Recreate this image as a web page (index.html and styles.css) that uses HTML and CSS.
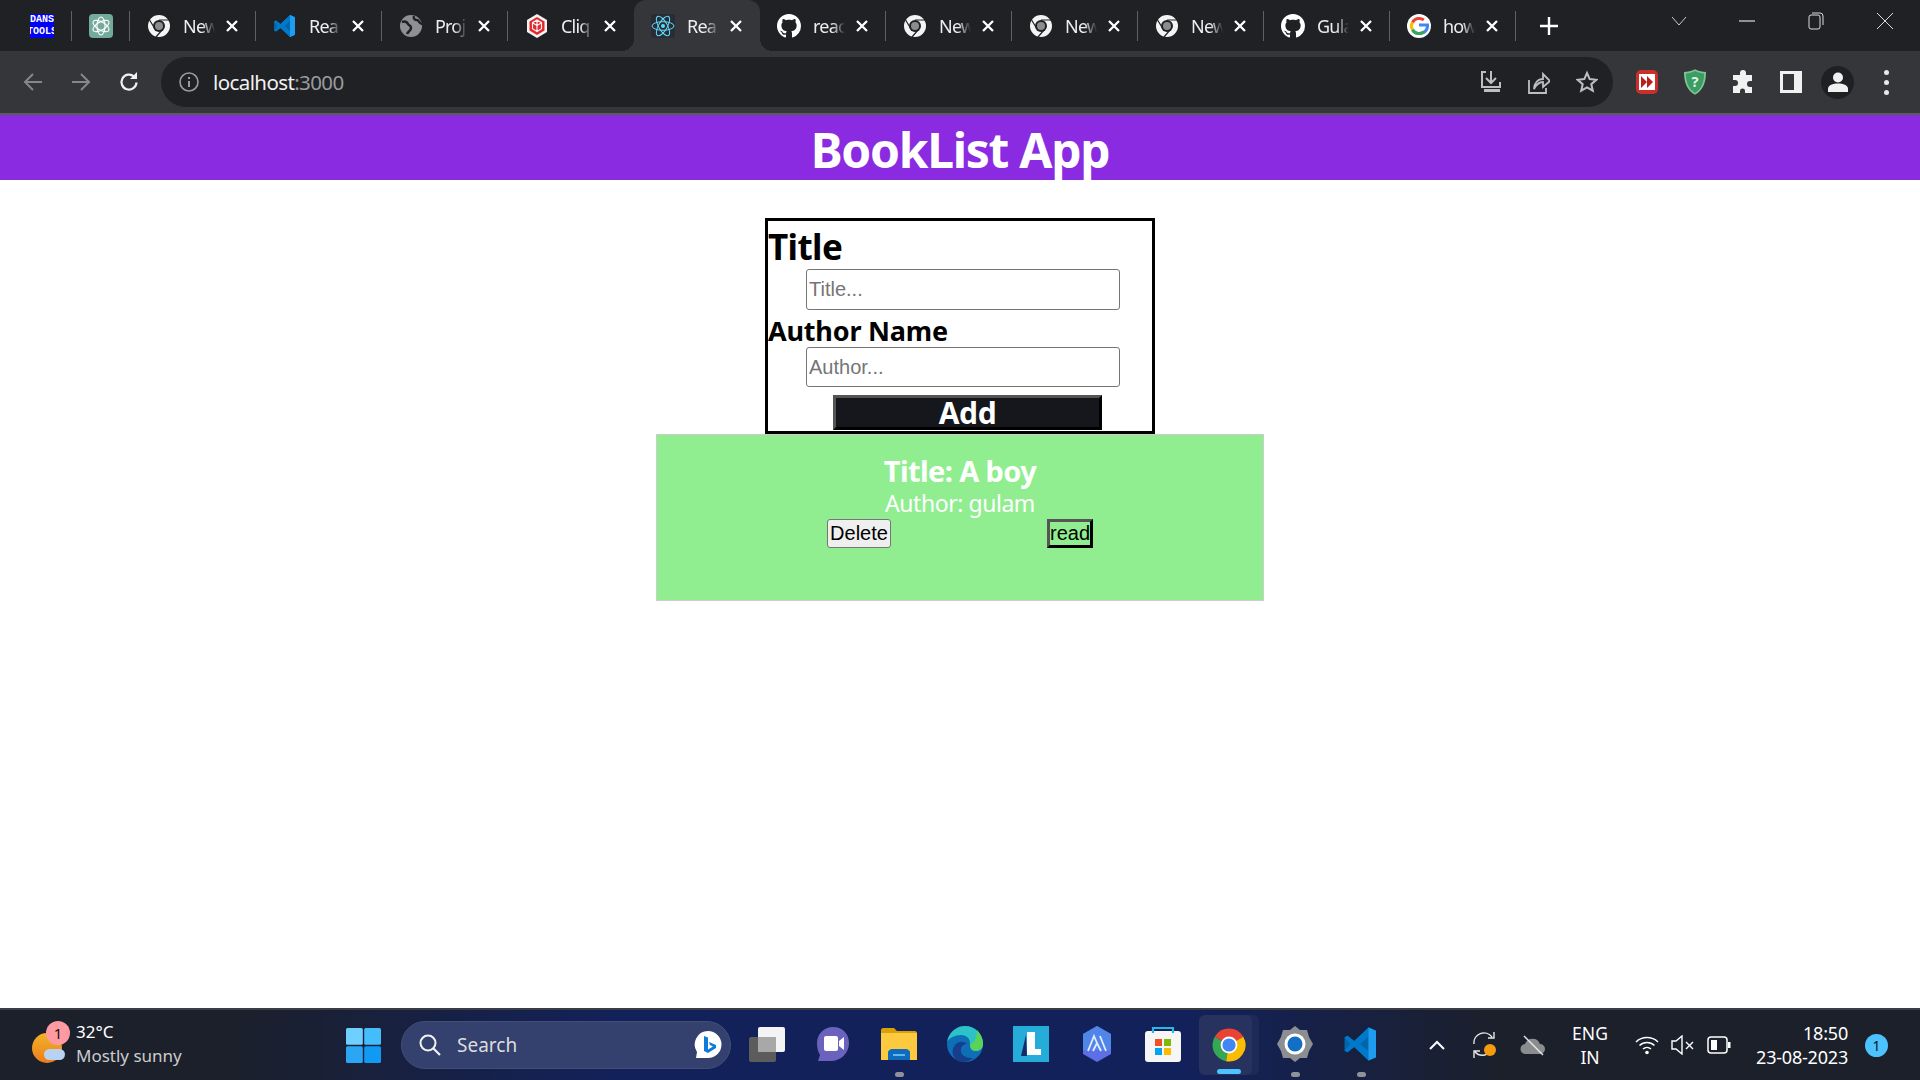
FILE: index.html
```html
<!DOCTYPE html>
<html lang="en">
<head>
    <meta charset="UTF-8">
    <title>BookList App</title>
    <link rel="stylesheet" href="styles.css">
</head>
<body>
<svg class="defs" width="0" height="0">
    <symbol id="chrome-mono" viewBox="0 0 24 24">
        <circle cx="12" cy="12" r="11" fill="#f4f4f4"/>
        <circle cx="12" cy="12" r="6" fill="#202124"/>
        <circle cx="12" cy="12" r="4" fill="#8a8c90"/>
        <path d="M12 6H23M8 15L2 5M15 16L9 23" stroke="#202124" stroke-width="1.2"/>
    </symbol>
    <symbol id="github" viewBox="0 0 16 16">
        <path fill="#fff" d="M8 0C3.58 0 0 3.58 0 8c0 3.54 2.29 6.53 5.47 7.59.4.07.55-.17.55-.38 0-.19-.01-.82-.01-1.49-2.01.37-2.53-.49-2.69-.94-.09-.23-.48-.94-.82-1.13-.28-.15-.68-.52-.01-.53.63-.01 1.08.58 1.23.82.72 1.21 1.87.87 2.33.66.07-.52.28-.87.51-1.07-1.78-.2-3.64-.89-3.64-3.95 0-.87.31-1.59.82-2.15-.08-.2-.36-1.02.08-2.12 0 0 .67-.21 2.2.82.64-.18 1.32-.27 2-.27s1.36.09 2 .27c1.53-1.04 2.2-.82 2.2-.82.44 1.1.16 1.92.08 2.12.51.56.82 1.27.82 2.15 0 3.07-1.87 3.75-3.65 3.95.29.25.54.73.54 1.48 0 1.07-.01 1.93-.01 2.2 0 .21.15.46.55.38A8.01 8.01 0 0 0 16 8c0-4.42-3.58-8-8-8z"/>
    </symbol>
    <symbol id="vscode" viewBox="0 0 24 24">
        <path fill="#0065a9" d="M17 1L7.5 10 3 6.5 1 7.5v9l2 1 4.5-3.500L17 23l5-2.200V3.200z"/>
        <path fill="#007acc" d="M17 1l5 2.200v17.600L17 23 7.500 14 3 17.500l-2-1L5 12 1 7.500l2-1L7.500 10zM17 7l-5.500 5 5.500 5z" opacity=".95"/>
        <path fill="#1f9cf0" d="M17 1l5 2.200v17.600L17 23z"/>
    </symbol>
    <symbol id="chrome-color" viewBox="0 0 24 24">
        <path fill="#ea4335" d="M12 12L21.530 6.500A11 11 0 0 0 2.470 6.500z"/>
        <path fill="#34a853" d="M12 12L2.470 6.500A11 11 0 0 0 10 22.820z"/>
        <path fill="#fbbc04" d="M12 12L10 22.820A11 11 0 0 0 21.530 6.500z"/>
        <circle cx="12" cy="12" r="5.600" fill="#fff"/>
        <circle cx="12" cy="12" r="4.400" fill="#4285f4"/>
    </symbol>
    <symbol id="close" viewBox="0 0 12 12">
        <path d="M1 1l10 10M11 1L1 11" stroke="#fff" stroke-width="2.300"/>
    </symbol>
</svg>

<div class="tabbar">
    <div class="pinned first">
        <span class="dans">DANS<span class="dans-low">TOOLS</span></span>
    </div>
    <div class="pinned">
        <svg class="favicon" viewBox="0 0 24 24">
            <rect width="24" height="24" rx="4" fill="#74aa9c"/>
            <g fill="none" stroke="#fff" stroke-width="1.100">
                <ellipse cx="12" cy="12" rx="4" ry="9"/>
                <ellipse cx="12" cy="12" rx="4" ry="9" transform="rotate(60 12 12)"/>
                <ellipse cx="12" cy="12" rx="4" ry="9" transform="rotate(120 12 12)"/>
            </g>
        </svg>
    </div>
    <div class="tab">
        <svg class="favicon"><use href="#chrome-mono"/></svg>
        <span class="tab-title">New</span><svg class="tab-close"><use href="#close"/></svg>
    </div>
    <div class="tab">
        <svg class="favicon"><use href="#vscode"/></svg>
        <span class="tab-title">Rea</span><svg class="tab-close"><use href="#close"/></svg>
    </div>
    <div class="tab">
        <svg class="favicon" viewBox="0 0 24 24">
            <circle cx="12" cy="12" r="11" fill="#8e9094"/>
            <path d="M3 8c3-1 5 0 6 2s3 1 3 4-3 3-4 6M15 2c-1 3 1 4 3 4s2 4 5 4" fill="none" stroke="#202124" stroke-width="2.500"/>
        </svg>
        <span class="tab-title">Proj</span><svg class="tab-close"><use href="#close"/></svg>
    </div>
    <div class="tab tab-before-active">
        <svg class="favicon" viewBox="0 0 24 24">
            <path d="M12 0l10 6v12l-10 6-10-6V6z" fill="#f3f3f3"/>
            <path d="M12 3l7.500 4.500v9L12 21l-7.500-4.500v-9z" fill="#e5262b"/>
            <path d="M12 6l4.500 2.700v6L12 17.500l-4.500-2.800v-6zM12 6v11.500M7.500 8.700L12 11.500l4.500-2.800" fill="none" stroke="#f3f3f3" stroke-width="1.200"/>
        </svg>
        <span class="tab-title">Cliq</span><svg class="tab-close"><use href="#close"/></svg>
    </div>
    <div class="tab active">
        <svg class="favicon" viewBox="0 0 24 24">
            <rect width="24" height="24" rx="3" fill="#282c34"/>
            <g fill="none" stroke="#61dafb" stroke-width="1">
                <ellipse cx="12" cy="12" rx="11" ry="4.300"/>
                <ellipse cx="12" cy="12" rx="11" ry="4.300" transform="rotate(60 12 12)"/>
                <ellipse cx="12" cy="12" rx="11" ry="4.300" transform="rotate(120 12 12)"/>
            </g>
            <circle cx="12" cy="12" r="2" fill="#61dafb"/>
        </svg>
        <span class="tab-title">Rea</span><svg class="tab-close"><use href="#close"/></svg>
    </div>
    <div class="tab">
        <svg class="favicon"><use href="#github"/></svg>
        <span class="tab-title">reac</span><svg class="tab-close"><use href="#close"/></svg>
    </div>
    <div class="tab">
        <svg class="favicon"><use href="#chrome-mono"/></svg>
        <span class="tab-title">New</span><svg class="tab-close"><use href="#close"/></svg>
    </div>
    <div class="tab">
        <svg class="favicon"><use href="#chrome-mono"/></svg>
        <span class="tab-title">New</span><svg class="tab-close"><use href="#close"/></svg>
    </div>
    <div class="tab">
        <svg class="favicon"><use href="#chrome-mono"/></svg>
        <span class="tab-title">New</span><svg class="tab-close"><use href="#close"/></svg>
    </div>
    <div class="tab">
        <svg class="favicon"><use href="#github"/></svg>
        <span class="tab-title">Gula</span><svg class="tab-close"><use href="#close"/></svg>
    </div>
    <div class="tab">
        <svg class="favicon" viewBox="0 0 24 24">
            <circle cx="12" cy="12" r="12" fill="#fff"/>
            <path d="M12 11h8.500c.3 5-3 8.500-8.500 8.500a7.500 7.500 0 0 1-6.500-3.800" fill="none" stroke="#4285f4" stroke-width="3"/>
            <path d="M5.500 8.500A7.500 7.500 0 0 1 16.800 6" fill="none" stroke="#ea4335" stroke-width="3"/>
            <path d="M5.500 8.200a7.500 7.500 0 0 0 0 7.600" fill="none" stroke="#fbbc04" stroke-width="3"/>
            <path d="M5.500 15.700A7.500 7.500 0 0 0 17 17.600" fill="none" stroke="#34a853" stroke-width="3"/>
        </svg>
        <span class="tab-title">how</span><svg class="tab-close"><use href="#close"/></svg>
    </div>
    <svg class="new-tab" viewBox="0 0 18 18"><path d="M9 0v18M0 9h18" stroke="#fff" stroke-width="2.400"/></svg>
    <div class="window-btns">
        <svg viewBox="0 0 16 10" class="win-down"><path d="M1 1l7 8 7-8" fill="none" stroke="#ccc"/></svg>
        <svg viewBox="0 0 16 16" class="win-min"><path d="M0 8h16" stroke="#ddd" stroke-width="1.200"/></svg>
        <svg viewBox="0 0 16 18" class="win-max"><rect x="1" y="3" width="11" height="14" rx="2" fill="none" stroke="#ddd"/><path d="M4 1h8a3 3 0 0 1 3 3v9" fill="none" stroke="#ddd"/></svg>
        <svg viewBox="0 0 16 16" class="win-close"><path d="M0 0l16 16M16 0L0 16" stroke="#ddd"/></svg>
    </div>
</div>

<div class="toolbar">
    <svg class="nav" viewBox="0 0 20 20"><path d="M19 10H2M10 2l-8 8 8 8" fill="none" stroke="#85878a" stroke-width="2"/></svg>
    <svg class="nav" viewBox="0 0 20 20"><path d="M1 10h17M10 2l8 8-8 8" fill="none" stroke="#85878a" stroke-width="2"/></svg>
    <svg class="nav" viewBox="0 0 20 20"><path d="M17.500 10.500A7.500 7.500 0 1 1 15 4.500" fill="none" stroke="#f1f1f1" stroke-width="2.200"/><path d="M11 7h7V0z" fill="#f1f1f1"/></svg>
    <div class="omnibox">
        <svg class="info" viewBox="0 0 20 20"><circle cx="10" cy="10" r="9" fill="none" stroke="#9a9c9f" stroke-width="1.600"/><path d="M10 9v6M10 5v2" stroke="#9a9c9f" stroke-width="2"/></svg>
        <span class="url">localhost<span class="port">:3000</span></span>
        <div class="omni-icons">
            <svg viewBox="0 0 22 24"><path d="M6 2H2v15h18v-5M11 1v12M6 8l5 5 5-5" fill="none" stroke="#bdbec0" stroke-width="2"/><rect x="4" y="19" width="16" height="3" fill="#bdbec0"/></svg>
            <svg viewBox="0 0 22 24"><path d="M1 10v13h17v-5" fill="none" stroke="#bdbec0" stroke-width="1.800"/><path d="M6 19c0-6 4-10 9-10V4l7 7-7 6v-5c-4 0-7 3-9 7z" fill="none" stroke="#bdbec0" stroke-width="1.800"/></svg>
            <svg viewBox="0 0 22 22"><path d="M11 2l2.700 6.100 6.600.7-5 4.400 1.500 6.500L11 16.300l-5.800 3.400 1.500-6.500-5-4.400 6.600-.7z" fill="none" stroke="#bdbec0" stroke-width="2"/></svg>
        </div>
    </div>
    <div class="ext-icons">
        <svg viewBox="0 0 22 24"><rect width="22" height="24" rx="5" fill="#c9302c"/><rect x="3" y="4" width="16" height="16" fill="#fff"/><path d="M5 6l6 6-6 6zM11 6l6 6-6 6z" fill="#b9201d"/></svg>
        <svg viewBox="0 0 24 28"><path d="M12 0c4 2 8 3 12 3 0 11-3 20-12 25C3 23 0 14 0 3c4 0 8-1 12-3z" fill="#7cc596"/><path d="M12 2c3.500 1.500 6.500 2.500 10 2.700C22 14 19 21.500 12 26 5 21.500 2 14 2 4.700 5.500 4.500 8.500 3.500 12 2z" fill="#3c9d63"/><text x="12" y="19" class="ext-q">?</text></svg>
        <svg viewBox="0 0 22 22"><path fill="#f1f1f1" d="M8 2a3 3 0 0 1 6 0v2h6v6h-2a3 3 0 0 0 0 6h2v6h-7v-2a2.500 2.500 0 0 0-5 0v2H1v-7h2a3 3 0 0 0 0-6H1V4h7z"/></svg>
        <svg viewBox="0 0 22 22"><path fill="#f1f1f1" fill-rule="evenodd" d="M0 0h22v22H0zM3 3v16h11V3z"/></svg>
        <div class="avatar">
            <svg viewBox="0 0 20 20"><circle cx="10" cy="5.500" r="5" fill="#f1f1f1"/><path d="M0 20v-3c0-4 5-5.500 10-5.500s10 1.500 10 5.500v3z" fill="#f1f1f1"/></svg>
        </div>
        <div class="kebab"><span></span><span></span><span></span></div>
    </div>
</div>
<div class="toolbar-line"></div>

<div class="page">
    <h1 class="app-title">BookList App</h1>
    <form class="book-form">
        <h1 class="label-big">Title</h1>
        <input class="field first-field" placeholder="Title...">
        <h2 class="label-small">Author Name</h2>
        <input class="field" placeholder="Author...">
        <button type="button" class="add-btn">Add</button>
    </form>
    <div class="book-card">
        <h3 class="book-title">Title: A boy</h3>
        <p class="book-author">Author: gulam</p>
        <div class="book-actions">
            <button type="button" class="delete-btn">Delete</button>
            <button type="button" class="read-btn">read</button>
        </div>
    </div>
</div>

<div class="taskbar">
    <div class="weather">
        <div class="sun">
            <span class="sun-disc"></span>
            <span class="cloud"></span>
            <span class="sun-badge">1</span>
        </div>
        <div class="weather-text">
            <span class="temp">32°C</span>
            <span class="sky">Mostly sunny</span>
        </div>
    </div>
    <svg class="start" viewBox="0 0 35 35">
        <rect width="16.800" height="16.800" rx="1.500" fill="#6fd0ff"/>
        <rect x="18.200" width="16.800" height="16.800" rx="1.500" fill="#45bcfb"/>
        <rect y="18.200" width="16.800" height="16.800" rx="1.500" fill="#2aa6f5"/>
        <rect x="18.200" y="18.200" width="16.800" height="16.800" rx="1.500" fill="#119af3"/>
    </svg>
    <div class="search">
        <svg class="search-glass" viewBox="0 0 22 22"><circle cx="9" cy="9" r="7.500" fill="none" stroke="#f2f2f2" stroke-width="2"/><path d="M14.500 14.500L21 21" stroke="#f2f2f2" stroke-width="2.200"/></svg>
        <span class="search-text">Search</span>
        <svg class="bing" viewBox="0 0 30 30"><path d="M15 1a13.500 13.500 0 0 1 0 27H3l1-6A13.500 13.500 0 0 1 15 1z" fill="#fff"/><path d="M11 6l4 1.500v12l5-3-3-1.500-1-3 7 3v3l-8 5-4-2z" fill="#0f7ad8"/></svg>
    </div>
    <div class="apps">
        <div class="app">
            <svg viewBox="0 0 36 36">
                <rect x="0" y="11" width="27" height="25" rx="2" fill="#5c5c5c"/>
                <rect x="9" y="1" width="27" height="25" rx="2" fill="#f4f4f4"/>
                <rect x="9" y="11" width="18" height="15" fill="#a8a8a8"/>
            </svg>
        </div>
        <div class="app">
            <svg viewBox="0 0 36 36">
                <path d="M18 1c10 0 16 7 16 16 0 10-8 18-18 18H3l2-6C3 26 2 22 2 17 2 8 9 1 18 1z" fill="#6b62bd"/>
                <rect x="9" y="10" width="14" height="15" rx="2" fill="#fff"/>
                <path d="M24 15l5-4v13l-5-4z" fill="#fff"/>
            </svg>
        </div>
        <div class="app has-dot">
            <svg viewBox="0 0 36 36">
                <path d="M0 4c0-1 1-2 2-2h11l3 3h18c1 0 2 1 2 2v10H0z" fill="#d9a008"/>
                <path d="M0 7h36v27H0z" fill="#fdc93f"/>
                <path d="M7 34V26c0-1 2-3 4-3h14c2 0 4 2 4 3v8z" fill="#0f6cbd"/>
                <rect x="12" y="28" width="12" height="2" fill="#65b5ef"/>
            </svg>
        </div>
        <div class="app">
            <svg viewBox="0 0 36 36">
                <circle cx="18" cy="18" r="18" fill="#0f6fb6"/>
                <path d="M0 16C2 6 10 0 18 0c10 0 18 8 18 18 0 4-3 7-7 7-6 0-6-4-6-8 0-5-4-8-9-8-6 0-12 3-14 7z" fill="#2cc2c7"/>
                <path d="M30 4c4 4 6 9 6 14 0 4-3 7-7 7-5 0-6-4-6-7 3 0 7-4 7-14z" fill="#5ad35b"/>
                <path d="M14 36C6 34 3 25 8 19c3-4 9-4 12-1-4 0-7 3-6 8 1 4 6 6 12 6-3 3-7 4-12 4z" fill="#163e8c"/>
            </svg>
        </div>
        <div class="app">
            <svg viewBox="0 0 36 36">
                <rect width="36" height="36" fill="#25acd8"/>
                <path d="M14 6h8v20h-8z" fill="#fff"/>
                <path d="M14 23h14v6H14z" fill="#fff"/>
                <path d="M13 9L8 30h6z" fill="#142a6b"/>
            </svg>
        </div>
        <div class="app">
            <svg viewBox="0 0 32 36">
                <path d="M16 0l14 8v20l-14 8-14-8V8z" fill="#5d6fe6"/>
                <path d="M16 0l14 8v16H2V8z" fill="#4a90e8" opacity=".7"/>
                <path d="M7 25l6-15 3 7M25 25l-6-15M12 25l4-8 4 8" fill="none" stroke="#e6ecff" stroke-width="1.800"/>
            </svg>
        </div>
        <div class="app">
            <svg viewBox="0 0 36 36">
                <rect y="5" width="36" height="31" rx="3" fill="#f6f6f6"/>
                <path d="M8 7V2h20v5" fill="none" stroke="#29b6e8" stroke-width="2.200"/>
                <rect x="10" y="13" width="7" height="7" fill="#f25022"/>
                <rect x="19" y="13" width="7" height="7" fill="#7fba00"/>
                <rect x="10" y="22" width="7" height="7" fill="#00a4ef"/>
                <rect x="19" y="22" width="7" height="7" fill="#ffb900"/>
            </svg>
        </div>
        <div class="app app-active">
            <svg><use href="#chrome-color"/></svg>
        </div>
        <div class="app has-dot">
            <svg viewBox="0 0 36 36">
                <path d="M18 0l5 4 7 0 2 7 4 7-4 7-2 7-7 0-5 4-5-4-7 0-2-7-4-7 4-7 2-7 7 0z" fill="#8b8f94"/>
                <circle cx="18" cy="18" r="10.500" fill="#fff"/>
                <circle cx="18" cy="18" r="7.500" fill="#1170c6"/>
            </svg>
        </div>
        <div class="app has-dot">
            <svg><use href="#vscode"/></svg>
        </div>
    </div>
    <div class="tray">
        <svg class="tray-chevron" viewBox="0 0 16 10"><path d="M1 9l7-7 7 7" fill="none" stroke="#fff" stroke-width="2"/></svg>
        <svg class="tray-sync" viewBox="0 0 26 26">
            <path d="M2 12A10 10 0 0 1 20 5M22 0v6h-6M20 16A10 10 0 0 1 3 20M2 26v-7h6" fill="none" stroke="#e8e8e8" stroke-width="1.400"/>
            <circle cx="18" cy="18" r="6" fill="#f59b0c"/>
        </svg>
        <svg class="tray-cloud" viewBox="0 0 26 22">
            <path d="M6 20a5 5 0 0 1-1-10 8 8 0 0 1 15 0 5 5 0 0 1 0 10z" fill="#8a8c8f"/>
            <path d="M4 2l19 19" stroke="#e8e8e8" stroke-width="1.400"/>
        </svg>
        <div class="lang"><span>ENG</span><span>IN</span></div>
        <svg class="tray-wifi" viewBox="0 0 24 20">
            <path d="M1 7a16 16 0 0 1 22 0M4.500 10.500a11 11 0 0 1 15 0M8 14a6 6 0 0 1 8 0" fill="none" stroke="#fff" stroke-width="1.500"/>
            <circle cx="12" cy="17.500" r="1.800" fill="#fff"/>
        </svg>
        <svg class="tray-sound" viewBox="0 0 24 20">
            <path d="M1 6h4l6-5v18l-6-5H1z" fill="none" stroke="#fff" stroke-width="1.400"/>
            <path d="M15 7l7 7M22 7l-7 7" stroke="#fff" stroke-width="1.400"/>
        </svg>
        <svg class="tray-battery" viewBox="0 0 24 20">
            <rect x="1" y="2" width="19" height="16" rx="3" fill="none" stroke="#fff" stroke-width="1.500"/>
            <rect x="4" y="5" width="6" height="10" fill="#fff"/>
            <rect x="21" y="7" width="2.500" height="6" fill="#fff"/>
        </svg>
        <div class="clock"><span>18:50</span><span>23-08-2023</span></div>
        <span class="notify">1</span>
    </div>
</div>
</body>
</html>
```

FILE: styles.css
```css
html, body {
    margin: 0;
    padding: 0;
}

body {
    width: 1920px;
    height: 1080px;
    display: flex;
    flex-direction: column;
    overflow: hidden;
    background: #fff;
    font-family: "Noto Sans", sans-serif;
}

.defs {
    display: none;
}

/* browser tabs */
.tabbar {
    height: 51px;
    flex: none;
    display: flex;
    align-items: center;
    background: #202124;
    color: #fff;
}

.pinned {
    height: 51px;
    width: 58px;
    box-sizing: border-box;
    display: flex;
    align-items: center;
    justify-content: center;
    position: relative;
}

.pinned.first {
    width: 72px;
    padding-left: 12px;
}

.pinned::after,
.tab::after {
    content: "";
    position: absolute;
    right: 0;
    top: 11px;
    height: 30px;
    width: 1px;
    background: #5f6063;
}

.favicon {
    width: 24px;
    height: 24px;
    flex: none;
}

.dans {
    width: 24px;
    height: 24px;
    background: #0000f2;
    color: #fff;
    font: bold 10px/12px "Liberation Mono", monospace;
    white-space: nowrap;
    overflow: hidden;
}

.dans-low {
    display: block;
    margin-left: -3px;
}

.tab {
    width: 126px;
    height: 51px;
    box-sizing: border-box;
    padding-left: 17px;
    display: flex;
    align-items: center;
    position: relative;
    flex: none;
}

.tab-title {
    width: 32px;
    margin-left: 12px;
    font-size: 18px;
    letter-spacing: -0.8px;
    white-space: nowrap;
    overflow: hidden;
    color: #eee;
    -webkit-mask-image: linear-gradient(to right, #000 60%, transparent 100%);
    mask-image: linear-gradient(to right, #000 60%, transparent 100%);
}

.tab-close {
    width: 12px;
    height: 12px;
    margin-left: 11px;
    flex: none;
}

.tab-before-active::after {
    display: none;
}

.tab.active {
    background: #35363a;
    border-radius: 12px 12px 0 0;
}

/* little flared corners at the foot of the active tab */
.tab.active::before,
.tab.active::after {
    content: "";
    position: absolute;
    top: auto;
    bottom: 0;
    width: 12px;
    height: 12px;
}

.tab.active::before {
    left: -12px;
    background: radial-gradient(circle at 0 0, transparent 12px, #35363a 12px);
}

.tab.active::after {
    right: -12px;
    background: radial-gradient(circle at 100% 0, transparent 12px, #35363a 12px);
}

.new-tab {
    width: 18px;
    height: 18px;
    margin-left: 24px;
    flex: none;
}

.window-btns {
    display: flex;
    align-items: center;
    margin-left: auto;
    height: 51px;
}

.win-down {
    width: 16px;
    height: 10px;
    margin-right: 52px;
    margin-bottom: 10px;
}

.win-min {
    width: 16px;
    height: 16px;
    margin-right: 53px;
    margin-bottom: 10px;
}

.win-max {
    width: 16px;
    height: 18px;
    margin-right: 53px;
    margin-bottom: 10px;
}

.win-close {
    width: 16px;
    height: 16px;
    margin-right: 27px;
    margin-bottom: 10px;
}

/* url bar */
.toolbar {
    height: 62px;
    flex: none;
    display: flex;
    align-items: center;
    background: #35363a;
    padding-left: 23px;
    box-sizing: border-box;
}

.nav {
    width: 20px;
    height: 20px;
    margin-right: 28px;
    flex: none;
}

.omnibox {
    width: 1452px;
    height: 50px;
    margin-left: -6px;
    flex: none;
    border-radius: 25px;
    background: #202124;
    display: flex;
    align-items: center;
    box-sizing: border-box;
    padding-left: 18px;
}

.info {
    width: 20px;
    height: 20px;
}

.url {
    margin-left: 14px;
    font-size: 20.500px;
    letter-spacing: -0.6px;
    color: #f1f1f1;
}

.port {
    color: #9a9c9f;
}

.omni-icons {
    margin-left: auto;
    margin-right: 15px;
    display: flex;
    align-items: center;
    gap: 26px;
}

.omni-icons svg {
    width: 22px;
    height: 24px;
}

.ext-icons {
    display: flex;
    align-items: center;
    margin-left: 23px;
}

.ext-icons > svg {
    width: 22px;
    height: 26px;
    margin-right: 26px;
}

.ext-q {
    fill: #dff2e6;
    font-size: 16px;
    font-weight: bold;
    text-anchor: middle;
}

.avatar {
    width: 33px;
    height: 33px;
    margin-left: -7px;
    border-radius: 50%;
    background: #1f2023;
    display: flex;
    align-items: center;
    justify-content: center;
}

.avatar svg {
    width: 20px;
    height: 20px;
}

.kebab {
    margin-left: 30px;
    display: flex;
    flex-direction: column;
    gap: 5px;
}

.kebab span {
    width: 5px;
    height: 5px;
    border-radius: 50%;
    background: #e8e8e8;
}

.toolbar-line {
    height: 2px;
    flex: none;
    background: #5a5b5f;
}

/* the app itself */
.page {
    flex: 1;
    display: flex;
    flex-direction: column;
    align-items: center;
}

.app-title {
    width: 100%;
    height: 65px;
    margin: 0;
    background: blueviolet;
    color: #fff;
    text-align: center;
    font-size: 48px;
    line-height: 70px;
    letter-spacing: -1.3px;
}

.book-form {
    width: 390px;
    height: 216px;
    margin-top: 38px;
    border: 3px solid #000;
    box-sizing: border-box;
    display: flex;
    flex-direction: column;
}

.label-big {
    margin: 0;
    height: 48px;
    font-size: 35px;
    line-height: 52px;
    letter-spacing: -0.6px;
}

.label-small {
    margin: 0;
    height: 37px;
    font-size: 27px;
    line-height: 41px;
    letter-spacing: -0.2px;
}

.field {
    width: 314px;
    height: 40px;
    margin-left: 38px;
    box-sizing: border-box;
    padding: 2px;
    font: 20px "Liberation Sans", sans-serif;
    border: 1px solid #767676;
    border-radius: 3px;
    flex: none;
}

.first-field {
    height: 41px;
}

.add-btn {
    width: 269px;
    height: 35px;
    margin: 8px 0 0 65px;
    padding: 0;
    background: #16171c;
    color: #fff;
    border: 3px outset #555;
    border-right-color: #000;
    border-bottom-color: #000;
    font: bold 30px/30px "Noto Sans", sans-serif;
    letter-spacing: -0.4px;
}

.book-card {
    width: 608px;
    height: 167px;
    box-sizing: border-box;
    border: 1px solid #ccc;
    background: lightgreen;
    color: #fff;
    text-align: center;
    padding-top: 18px;
}

.book-title {
    margin: 0;
    height: 35px;
    font-size: 29px;
    line-height: 35px;
    letter-spacing: -0.6px;
}

.book-author {
    margin: 0;
    height: 31px;
    font-size: 23px;
    line-height: 31px;
    letter-spacing: -0.45px;
}

.book-actions {
    display: flex;
    justify-content: center;
    gap: 156px;
}

.delete-btn,
.read-btn {
    height: 29px;
    padding: 0;
    box-sizing: border-box;
    font: 20px "Liberation Sans", sans-serif;
    color: #000;
}

.delete-btn {
    width: 64px;
    background: #efefef;
    border: 1px solid #767676;
    border-radius: 3px;
}

.read-btn {
    width: 46px;
    background: transparent;
    border: 3px solid #000;
    border-top-color: #555;
    border-left-color: #555;
}

/* windows taskbar */
.taskbar {
    height: 72px;
    flex: none;
    box-sizing: border-box;
    border-top: 2px solid #3a3d44;
    background: linear-gradient(to right, #1b202b 0%, #1b202b 12%, #13215a 32%, #13215a 62%, #1b202b 78%, #1b202b 100%);
    display: flex;
    align-items: center;
    color: #fff;
}

.weather {
    width: 346px;
    box-sizing: border-box;
    padding-left: 32px;
    display: flex;
    align-items: center;
    flex: none;
}

.sun {
    width: 34px;
    height: 46px;
    position: relative;
    flex: none;
}

.sun-disc {
    position: absolute;
    left: 0;
    top: 11px;
    width: 30px;
    height: 30px;
    border-radius: 50%;
    background: linear-gradient(#f2b32a, #ec7d1a);
}

.cloud {
    position: absolute;
    left: 12px;
    top: 27px;
    width: 21px;
    height: 11px;
    border-radius: 6px;
    background: #b9d2f2;
}

.sun-badge {
    position: absolute;
    left: 14px;
    top: -1px;
    width: 24px;
    height: 24px;
    border-radius: 50%;
    background: #ff9aa2;
    color: #111;
    font-size: 15px;
    line-height: 24px;
    text-align: center;
}

.weather-text {
    display: flex;
    flex-direction: column;
    margin: -2px 0 0 10px;
    font-size: 17px;
    line-height: 24px;
}

.sky {
    color: #ccc;
}

.start {
    width: 35px;
    height: 35px;
    flex: none;
}

.search {
    width: 330px;
    height: 48px;
    margin-left: 20px;
    flex: none;
    box-sizing: border-box;
    border-radius: 24px;
    background: #34406d;
    border: 1px solid #434e78;
    padding-left: 17px;
    display: flex;
    align-items: center;
}

.search-glass {
    width: 22px;
    height: 22px;
}

.search-text {
    margin-left: 16px;
    font-size: 19px;
    color: #ddd;
}

.bing {
    width: 30px;
    height: 30px;
    margin-left: auto;
    margin-right: 7px;
}

.apps {
    display: flex;
    margin-left: 3px;
    flex: none;
}

.app {
    width: 66px;
    height: 66px;
    display: flex;
    align-items: center;
    justify-content: center;
    position: relative;
    box-sizing: border-box;
    padding-bottom: 2px;
}

.app svg {
    width: 36px;
    height: 36px;
    position: relative;
}

.has-dot::after {
    content: "";
    position: absolute;
    left: 29px;
    bottom: 1px;
    width: 9px;
    height: 5px;
    border-radius: 3px;
    background: #8f929a;
}

/* chrome has two windows open, so its highlight is stacked */
.app-active {
    background: #1e2a56;
    border-radius: 6px;
    width: 60px;
    height: 60px;
    margin: 3px 3px;
    padding: 0;
}

.app-active::before {
    content: "";
    position: absolute;
    left: 0;
    top: 0;
    width: 53px;
    height: 60px;
    border-radius: 6px;
    background: #27325f;
}

.app-active::after {
    content: "";
    position: absolute;
    left: 18px;
    bottom: 1px;
    width: 24px;
    height: 5px;
    border-radius: 3px;
    background: #4cc2ff;
}

.tray {
    display: flex;
    align-items: center;
    flex: 1;
    position: relative;
}

.tray-chevron {
    width: 16px;
    height: 10px;
    margin-left: 35px;
}

.tray-sync {
    width: 26px;
    height: 26px;
    margin-left: 27px;
}

.tray-cloud {
    width: 26px;
    height: 22px;
    margin-left: 22px;
}

.lang {
    width: 50px;
    margin-left: 19px;
    display: flex;
    flex-direction: column;
    align-items: center;
    font-size: 17.500px;
    line-height: 24px;
}

.tray-wifi {
    width: 24px;
    height: 20px;
    margin-left: 20px;
}

.tray-sound {
    width: 24px;
    height: 20px;
    margin-left: 12px;
}

.tray-battery {
    width: 24px;
    height: 20px;
    margin-left: 12px;
}

.clock {
    width: 110px;
    margin-left: 7px;
    display: flex;
    flex-direction: column;
    align-items: flex-end;
    font-size: 18px;
    line-height: 24px;
    letter-spacing: -0.2px;
}

.notify {
    width: 23px;
    height: 23px;
    margin-left: 17px;
    border-radius: 50%;
    background: #4cc2ff;
    color: #111;
    font-size: 14px;
    line-height: 23px;
    text-align: center;
}
```
